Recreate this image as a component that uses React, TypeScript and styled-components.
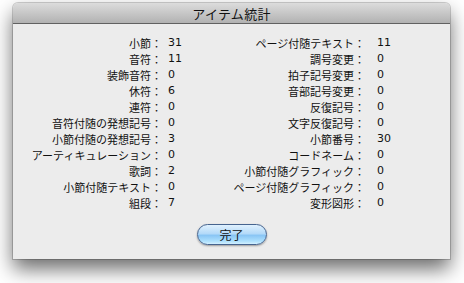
import React from "react";
import styled, { createGlobalStyle } from "styled-components";

const GlobalStyle = createGlobalStyle`
  html, body {
    margin: 0;
    padding: 0;
    background: #ffffff;
  }
  body {
    font-family: "Noto Sans CJK JP", "DejaVu Sans", sans-serif;
  }
`;

const Page = styled.div`
  padding: 3px 0 0 13px;
  width: 464px;
  height: 283px;
  box-sizing: border-box;
  overflow: hidden;
`;

const Window = styled.div`
  width: 437px;
  height: 256px;
  display: flex;
  flex-direction: column;
  border-radius: 5px 5px 0 0;
  background: #ececec;
  box-shadow: 0 10px 20px rgba(0, 0, 0, 0.58), 0 0 0 1px rgba(0, 0, 0, 0.18);
  overflow: hidden;
`;

const TitleBar = styled.div`
  height: 20px;
  flex: none;
  display: flex;
  align-items: center;
  justify-content: center;
  background: linear-gradient(#dcdcdc, #b2b2b2);
  border-bottom: 1px solid #616161;
  font-size: 13px;
  color: #111;
  letter-spacing: 0.3px;
`;

const Body = styled.div`
  flex: 1;
  display: flex;
  flex-direction: column;
  align-items: center;
  padding-top: 11px;
`;

const Grid = styled.div`
  align-self: stretch;
  display: grid;
  grid-template-columns: 149px 54px 149px 1fr;
  grid-template-rows: repeat(11, 16px);
  font-size: 11px;
  line-height: 16px;
  color: #111;
`;

const Label = styled.div<{ $col: number }>`
  grid-column: ${(p) => p.$col};
  text-align: right;
  white-space: nowrap;
`;

const Value = styled.div<{ $col: number; $indent: number }>`
  grid-column: ${(p) => p.$col};
  padding-left: ${(p) => p.$indent}px;
  font-family: "DejaVu Sans", sans-serif;
  font-size: 11px;
`;

const Button = styled.button`
  margin-top: 13px;
  width: 70px;
  height: 21px;
  border-radius: 11px;
  border: 1px solid #46648f;
  background: linear-gradient(
    #e0f1fe 0%,
    #b4daf9 45%,
    #8ac6f5 55%,
    #ade0fd 85%,
    #d2f0ff 100%
  );
  box-shadow: 0 1px 2px rgba(0, 0, 0, 0.35);
  font-family: "Noto Sans CJK JP", sans-serif;
  font-size: 12px;
  line-height: 19px;
  color: #111;
  padding: 0;
`;

const left: [string, string][] = [
  ["小節：", "31"],
  ["音符：", "11"],
  ["装飾音符：", "0"],
  ["休符：", "6"],
  ["連符：", "0"],
  ["音符付随の発想記号：", "0"],
  ["小節付随の発想記号：", "3"],
  ["アーティキュレーション：", "0"],
  ["歌詞：", "2"],
  ["小節付随テキスト：", "0"],
  ["組段：", "7"],
];

const right: [string, string][] = [
  ["ページ付随テキスト：", "11"],
  ["調号変更：", "0"],
  ["拍子記号変更：", "0"],
  ["音部記号変更：", "0"],
  ["反復記号：", "0"],
  ["文字反復記号：", "0"],
  ["小節番号：", "30"],
  ["コードネーム：", "0"],
  ["小節付随グラフィック：", "0"],
  ["ページ付随グラフィック：", "0"],
  ["変形図形：", "0"],
];

const App = (): JSX.Element => {
  const rows = (items: [string, string][], col: number, indent: number) =>
    items.map(([label, value], i) => (
      <React.Fragment key={`${col}-${i}`}>
        <Label $col={col} style={{ gridRow: i + 1 }}>
          {label}
        </Label>
        <Value $col={col + 1} $indent={indent} style={{ gridRow: i + 1 }}>
          {value}
        </Value>
      </React.Fragment>
    ));

  return (
    <>
      <GlobalStyle />
      <Page>
        <Window>
          <TitleBar>アイテム統計</TitleBar>
          <Body>
            <Grid>
              {rows(left, 1, 6)}
              {rows(right, 3, 12)}
            </Grid>
            <Button>完了</Button>
          </Body>
        </Window>
      </Page>
    </>
  );
};

export default App;
